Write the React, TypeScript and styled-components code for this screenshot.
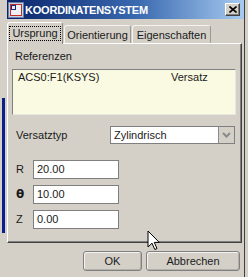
import React from 'react';
import styled, { createGlobalStyle } from 'styled-components';

const GlobalStyle = createGlobalStyle`
  html, body { margin: 0; padding: 0; background: #d4d0c8; }
  body {
    font-family: "Liberation Sans", Arial, sans-serif;
    font-size: 11px;
    color: #1a1a1a;
  }
  * { box-sizing: border-box; }
`;

const Screen = styled.div`
  position: relative;
  display: flex;
  width: 248px;
  height: 277px;
  overflow: hidden;
  background: #d4d0c8;
`;

const LeftEdge = styled.div`
  flex: none;
  width: 7px;
  padding: 98px 2px 0 2px;
`;

const BlueStrip = styled.div`
  width: 3px;
  height: 135px;
  background: #0c1e8c;
`;

const Window = styled.div`
  flex: none;
  width: 238px;
  display: flex;
  flex-direction: column;
  border-right: 1px solid #404040;
`;

const TitleBar = styled.div`
  height: 19px;
  display: flex;
  align-items: flex-start;
  padding: 2px 4px 0 1px;
  background: linear-gradient(to right, #0a246a 0%, #3a6ab0 55%, #a6caf0 100%);
`;

const TitleText = styled.div`
  margin-left: 1px;
  margin-top: 2px;
  color: #fff;
  font-weight: bold;
  font-size: 11px;
  line-height: 13px;
  letter-spacing: -0.2px;
`;

const CloseButton = styled.div`
  margin-left: auto;
  margin-top: 1px;
  width: 15px;
  height: 13px;
  display: flex;
  align-items: center;
  justify-content: center;
  background: #d4d0c8;
  border: 1px solid;
  border-color: #fff #404040 #404040 #fff;
  box-shadow: inset -1px -1px 0 #808080;
`;

const Body = styled.div`
  display: flex;
  flex-direction: column;
  padding-top: 3px;
`;

const TabRow = styled.div`
  height: 21px;
  display: flex;
  align-items: flex-end;
  gap: 1px;
`;

const Tab = styled.div<{ $w: number; $active?: boolean }>`
  position: relative;
  z-index: ${p => (p.$active ? 2 : 0)};
  width: ${p => p.$w}px;
  height: ${p => (p.$active ? 22 : 18)}px;
  margin-bottom: ${p => (p.$active ? -1 : 0)}px;
  display: flex;
  align-items: flex-start;
  justify-content: center;
  padding-top: 3px;
  background: #d4d0c8;
  border: 1px solid;
  border-bottom: none;
  border-color: ${p => (p.$active ? '#ffffff #8c8a84 transparent #ffffff' : '#f4f3ef #9c9a94 transparent #f4f3ef')};
  border-radius: 3px 3px 0 0;
  line-height: 13px;
`;

const FocusLabel = styled.span`
  border: 1px dotted #000;
  padding: 0 2px;
`;

const Panel = styled.div`
  height: 200px;
  margin-right: 2px;
  display: flex;
  flex-direction: column;
  border: 1px solid;
  border-color: #ffffff #404040 #404040 #ffffff;
  box-shadow: inset -1px -1px 0 #808080;
`;

const SectionLabel = styled.div`
  margin: 6px 0 0 7px;
  line-height: 13px;
`;

const RefBox = styled.div`
  margin: 6px 5px 0 4px;
  height: 46px;
  background: #fafae2;
  border: 1px solid;
  border-color: #808080 #e8e8e0 #e8e8e0 #808080;
  padding: 1px 0 0 5px;
  display: grid;
  grid-template-columns: 153px 1fr;
  align-content: start;
  line-height: 13px;
`;

const Row = styled.div<{ $mt: number }>`
  display: flex;
  align-items: center;
  margin: ${p => p.$mt}px 0 0 8px;
`;

const FieldRow = styled.div`
  display: flex;
  align-items: center;
`;

const Label = styled.div<{ $w: number }>`
  width: ${p => p.$w}px;
  flex: none;
  line-height: 13px;
`;

const ThetaLabel = styled(Label)`
  font-family: "DejaVu Sans", sans-serif;
  font-weight: bold;
  font-size: 12px;
`;

const Select = styled.div`
  width: 125px;
  height: 18px;
  display: flex;
  background: #fff;
  border: 1px solid #7f7f7f;
`;

const SelectValue = styled.div`
  flex: 1;
  padding-left: 3px;
  line-height: 16px;
`;

const SelectArrow = styled.div`
  width: 16px;
  display: flex;
  align-items: center;
  justify-content: center;
  background: #d4d0c8;
  border-left: 1px solid #8a8a8a;
`;

const Fields = styled.div`
  display: flex;
  flex-direction: column;
  gap: 6px;
`;

const Input = styled.div`
  width: 86px;
  height: 19px;
  background: #fff;
  border: 1px solid #7f7f7f;
  padding-left: 3px;
  line-height: 17px;
`;

const ButtonRow = styled.div`
  display: flex;
  justify-content: flex-end;
  gap: 4px;
  margin: 8px 4px 0 0;
`;

const Button = styled.div<{ $w: number }>`
  width: ${p => p.$w}px;
  height: 20px;
  display: flex;
  align-items: center;
  justify-content: center;
  background: #d4d0c8;
  border: 1px solid #808080;
  border-radius: 3px;
  box-shadow: inset 1px 1px 0 #f4f3ef, inset -1px -1px 0 #b4b1aa;
  line-height: 13px;
`;

const Cursor = styled.svg`
  position: absolute;
  left: 147px;
  top: 230px;
`;

const AppIcon = () => (
  <svg width="16" height="16" viewBox="0 0 16 16">
    <rect x="0.5" y="0.5" width="15" height="15" fill="#c9d3e3" stroke="#6a7fa8" />
    <rect x="2.5" y="2.5" width="11" height="11" fill="#eef0f4" stroke="#c0302a" />
    <rect x="3" y="3" width="5" height="5" fill="#1a2a78" />
    <rect x="4" y="4" width="3" height="3" fill="#e8ecf4" />
  </svg>
);

export default function App() {
  return (
    <Screen>
      <GlobalStyle />
      <LeftEdge>
        <BlueStrip />
      </LeftEdge>
      <Window>
        <TitleBar>
          <AppIcon />
          <TitleText>KOORDINATENSYSTEM</TitleText>
          <CloseButton>
            <svg width="8" height="7" viewBox="0 0 8 7">
              <path d="M0.5 0.5 L7.5 6.5 M7.5 0.5 L0.5 6.5" stroke="#000" strokeWidth="1.6" />
            </svg>
          </CloseButton>
        </TitleBar>
        <Body>
          <TabRow>
            <Tab $w={56} $active>
              <FocusLabel>Ursprung</FocusLabel>
            </Tab>
            <Tab $w={67}>Orientierung</Tab>
            <Tab $w={79}>Eigenschaften</Tab>
          </TabRow>
          <Panel>
            <SectionLabel>Referenzen</SectionLabel>
            <RefBox>
              <span>ACS0:F1(KSYS)</span>
              <span>Versatz</span>
            </RefBox>
            <Row $mt={11}>
              <Label $w={94}>Versatztyp</Label>
              <Select>
                <SelectValue>Zylindrisch</SelectValue>
                <SelectArrow>
                  <svg width="9" height="6" viewBox="0 0 9 6">
                    <path d="M1 1 L4.5 4.5 L8 1" fill="none" stroke="#8a8a8a" strokeWidth="2" />
                  </svg>
                </SelectArrow>
              </Select>
            </Row>
            <Row $mt={16}>
              <Fields>
                <FieldRow>
                  <Label $w={17}>R</Label>
                  <Input>20.00</Input>
                </FieldRow>
                <FieldRow>
                  <ThetaLabel $w={17}>θ</ThetaLabel>
                  <Input>10.00</Input>
                </FieldRow>
                <FieldRow>
                  <Label $w={17}>Z</Label>
                  <Input>0.00</Input>
                </FieldRow>
              </Fields>
            </Row>
          </Panel>
          <ButtonRow>
            <Button $w={59}>OK</Button>
            <Button $w={94}>Abbrechen</Button>
          </ButtonRow>
        </Body>
      </Window>
      <Cursor width="13" height="21" viewBox="0 0 13 21">
        <path d="M1 1 L1 17 L5 13.2 L7.8 19.5 L10 18.6 L7.3 12.4 L12.3 12.4 Z" fill="#fff" stroke="#000" strokeWidth="1" strokeLinejoin="miter" />
      </Cursor>
    </Screen>
  );
}
